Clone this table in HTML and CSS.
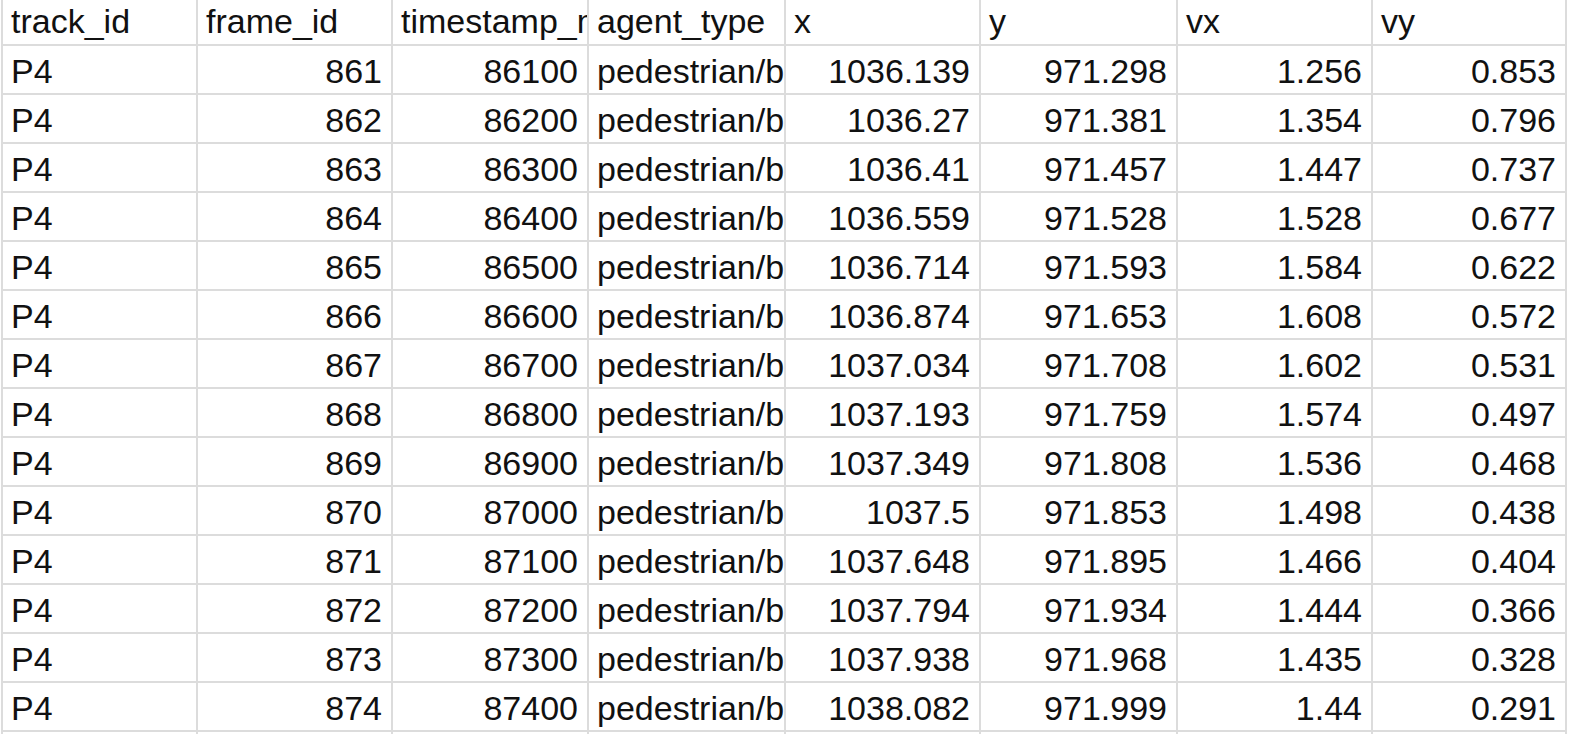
FILE: index.html
```html
<!DOCTYPE html>
<html lang="en">
<head>
<meta charset="utf-8">
<title>tracks</title>
<link rel="stylesheet" href="styles.css">
</head>
<body>
<table class="sheet">
  <colgroup>
    <col class="c1"><col class="c2"><col class="c3"><col class="c4"><col class="c5"><col class="c6"><col class="c7"><col class="c8">
  </colgroup>
  <thead>
    <tr class="head">
      <td>track_id</td><td>frame_id</td><td>timestamp_ms</td><td>agent_type</td><td>x</td><td>y</td><td>vx</td><td>vy</td>
    </tr>
  </thead>
  <tbody>
    <tr><td>P4</td><td class="num">861</td><td class="num">86100</td><td>pedestrian/bicycle</td><td class="num">1036.139</td><td class="num">971.298</td><td class="num">1.256</td><td class="num">0.853</td></tr>
    <tr><td>P4</td><td class="num">862</td><td class="num">86200</td><td>pedestrian/bicycle</td><td class="num">1036.27</td><td class="num">971.381</td><td class="num">1.354</td><td class="num">0.796</td></tr>
    <tr><td>P4</td><td class="num">863</td><td class="num">86300</td><td>pedestrian/bicycle</td><td class="num">1036.41</td><td class="num">971.457</td><td class="num">1.447</td><td class="num">0.737</td></tr>
    <tr><td>P4</td><td class="num">864</td><td class="num">86400</td><td>pedestrian/bicycle</td><td class="num">1036.559</td><td class="num">971.528</td><td class="num">1.528</td><td class="num">0.677</td></tr>
    <tr><td>P4</td><td class="num">865</td><td class="num">86500</td><td>pedestrian/bicycle</td><td class="num">1036.714</td><td class="num">971.593</td><td class="num">1.584</td><td class="num">0.622</td></tr>
    <tr><td>P4</td><td class="num">866</td><td class="num">86600</td><td>pedestrian/bicycle</td><td class="num">1036.874</td><td class="num">971.653</td><td class="num">1.608</td><td class="num">0.572</td></tr>
    <tr><td>P4</td><td class="num">867</td><td class="num">86700</td><td>pedestrian/bicycle</td><td class="num">1037.034</td><td class="num">971.708</td><td class="num">1.602</td><td class="num">0.531</td></tr>
    <tr><td>P4</td><td class="num">868</td><td class="num">86800</td><td>pedestrian/bicycle</td><td class="num">1037.193</td><td class="num">971.759</td><td class="num">1.574</td><td class="num">0.497</td></tr>
    <tr><td>P4</td><td class="num">869</td><td class="num">86900</td><td>pedestrian/bicycle</td><td class="num">1037.349</td><td class="num">971.808</td><td class="num">1.536</td><td class="num">0.468</td></tr>
    <tr><td>P4</td><td class="num">870</td><td class="num">87000</td><td>pedestrian/bicycle</td><td class="num">1037.5</td><td class="num">971.853</td><td class="num">1.498</td><td class="num">0.438</td></tr>
    <tr><td>P4</td><td class="num">871</td><td class="num">87100</td><td>pedestrian/bicycle</td><td class="num">1037.648</td><td class="num">971.895</td><td class="num">1.466</td><td class="num">0.404</td></tr>
    <tr><td>P4</td><td class="num">872</td><td class="num">87200</td><td>pedestrian/bicycle</td><td class="num">1037.794</td><td class="num">971.934</td><td class="num">1.444</td><td class="num">0.366</td></tr>
    <tr><td>P4</td><td class="num">873</td><td class="num">87300</td><td>pedestrian/bicycle</td><td class="num">1037.938</td><td class="num">971.968</td><td class="num">1.435</td><td class="num">0.328</td></tr>
    <tr><td>P4</td><td class="num">874</td><td class="num">87400</td><td>pedestrian/bicycle</td><td class="num">1038.082</td><td class="num">971.999</td><td class="num">1.44</td><td class="num">0.291</td></tr>
    <tr><td></td><td></td><td></td><td></td><td></td><td></td><td></td><td></td></tr>
  </tbody>
</table>
</body>
</html>
```

FILE: styles.css
```css
html, body {
  margin: 0;
  padding: 0;
  background: #ffffff;
  overflow: hidden;
  width: 1569px;
  height: 734px;
}

.sheet {
  margin: -2px 0 0 1px;
  width: 1566px;
  table-layout: fixed;
  border-collapse: separate;
  border-spacing: 2px;
  background: #dcdcdc;
  font-family: "Liberation Sans", Arial, sans-serif;
  font-size: 34px;
  color: #111111;
}

.c1 { width: 193px; }
.c2 { width: 193px; }
.c3 { width: 194px; }
.c4 { width: 195px; }
.c5 { width: 193px; }
.c6 { width: 195px; }
.c7 { width: 193px; }
.c8 { width: 192px; }

.sheet td {
  box-sizing: border-box;
  height: 47px;
  padding: 0 9px 3px 8px;
  background: #ffffff;
  line-height: 38px;
  vertical-align: bottom;
  white-space: nowrap;
  overflow: hidden;
  text-overflow: clip;
  text-align: left;
}

.sheet .head td {
  height: 44px;
  padding-bottom: 4px;
}

.sheet td.num {
  text-align: right;
}
```
